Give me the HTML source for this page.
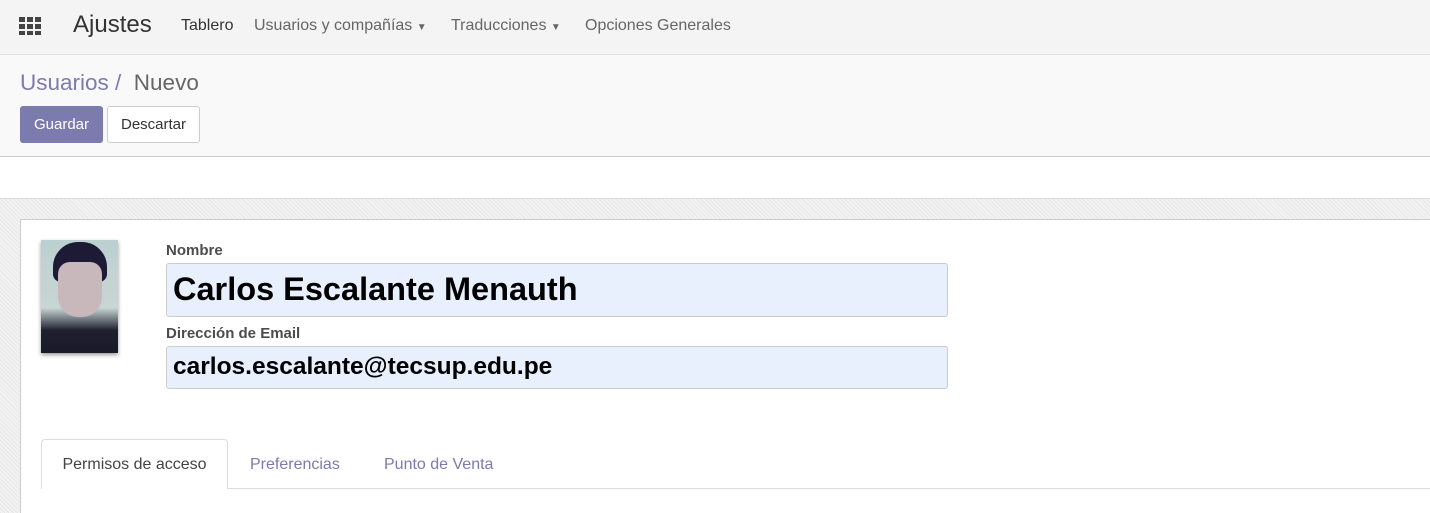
<!DOCTYPE html>
<html><head><meta charset="utf-8"><style>
*{margin:0;padding:0;box-sizing:border-box}
html,body{width:1430px;height:513px;overflow:hidden}
body{font-family:"Liberation Sans",Arial,sans-serif;background:#fff;position:relative}
.top{position:absolute;left:0;top:0;width:1430px;height:55px;background:#f4f4f4;border-bottom:1px solid #e2e2e2}
.top span{position:absolute;top:17px;font-size:16px;color:#666}
.cp{position:absolute;left:0;top:55px;width:1430px;height:102px;background:#f9f9f9;border-bottom:1px solid #ccc}
.bg{position:absolute;left:0;top:198px;width:1430px;height:315px;background:#eee;border-top:1px solid #ddd;
background-image:repeating-linear-gradient(45deg,#e8e8e8 0 1px,#f2f2f2 1px 3px)}
.sheet{position:absolute;left:20px;top:219px;width:1420px;height:300px;background:#fff;border:1px solid #ccc}
.lbl{position:absolute;font-weight:bold;font-size:15px;color:#4c4c4c}
.inp{position:absolute;background:#e8f0fe;border:1px solid #ccc;border-radius:3px;font-weight:bold;color:#000}
</style></head><body>
<div class="top">
<svg style="position:absolute;left:19px;top:17px" width="22" height="18"><g fill="#444">
<rect x="0" y="0" width="6" height="5"/><rect x="8" y="0" width="6" height="5"/><rect x="16" y="0" width="6" height="5"/>
<rect x="0" y="7" width="6" height="5"/><rect x="8" y="7" width="6" height="5"/><rect x="16" y="7" width="6" height="5"/>
<rect x="0" y="14" width="6" height="4"/><rect x="8" y="14" width="6" height="4"/><rect x="16" y="14" width="6" height="4"/></g></svg>
<span style="left:73px;top:11px;font-size:24px;color:#333">Ajustes</span>
<span style="left:181px;color:#333">Tablero</span>
<span style="left:254px">Usuarios y compañías <small style="font-size:10px">▼</small></span>
<span style="left:451px">Traducciones <small style="font-size:10px">▼</small></span>
<span style="left:585px">Opciones Generales</span>
</div>
<div class="cp">
<div style="position:absolute;left:20px;top:15px;font-size:22.5px;color:#7c7bad">Usuarios / <span style="color:#666">&nbsp;Nuevo</span></div>
<div style="position:absolute;left:20px;top:51px;width:83px;height:37px;background:#7c7bad;border-radius:3px;color:#fff;font-size:15px;line-height:37px;text-align:center">Guardar</div>
<div style="position:absolute;left:107px;top:51px;width:93px;height:37px;background:#fff;border:1px solid #ccc;border-radius:3px;color:#333;font-size:15px;line-height:35px;text-align:center">Descartar</div>
</div>
<div class="bg"></div>
<div class="sheet">
<div style="position:absolute;left:20px;top:20px;width:77px;height:113px;background:linear-gradient(#bcd0d0,#c8d6d4 60%,#1e2030 80%,#1a1a28);box-shadow:0 2px 4px rgba(0,0,0,.4)">
<div style="position:absolute;left:12px;top:2px;width:54px;height:40px;background:#1c1a35;border-radius:25px 25px 8px 8px"></div>
<div style="position:absolute;left:17px;top:22px;width:44px;height:55px;background:#c8b8bc;border-radius:12px 12px 20px 20px"></div>
</div>
<div class="lbl" style="left:145px;top:22px">Nombre</div>
<div class="inp" style="left:145px;top:43px;width:782px;height:54px;font-size:32.5px;line-height:50px;padding-left:6px">Carlos Escalante Menauth</div>
<div class="lbl" style="left:145px;top:105px">Dirección de Email</div>
<div class="inp" style="left:145px;top:126px;width:782px;height:43px;font-size:24.5px;line-height:40px;padding-left:6px">carlos.escalante@tecsup.edu.pe</div>
<div style="position:absolute;left:20px;top:268px;width:1400px;border-top:1px solid #ddd"></div>
<div style="position:absolute;left:20px;top:219px;width:187px;height:50px;background:#fff;border:1px solid #ddd;border-bottom:none;border-radius:4px 4px 0 0;font-size:16px;color:#444;text-align:center;line-height:50px">Permisos de acceso</div>
<div style="position:absolute;left:229px;top:236px;font-size:16px;color:#7c7bad">Preferencias</div>
<div style="position:absolute;left:363px;top:236px;font-size:16px;color:#7c7bad">Punto de Venta</div>
</div>
</body></html>
